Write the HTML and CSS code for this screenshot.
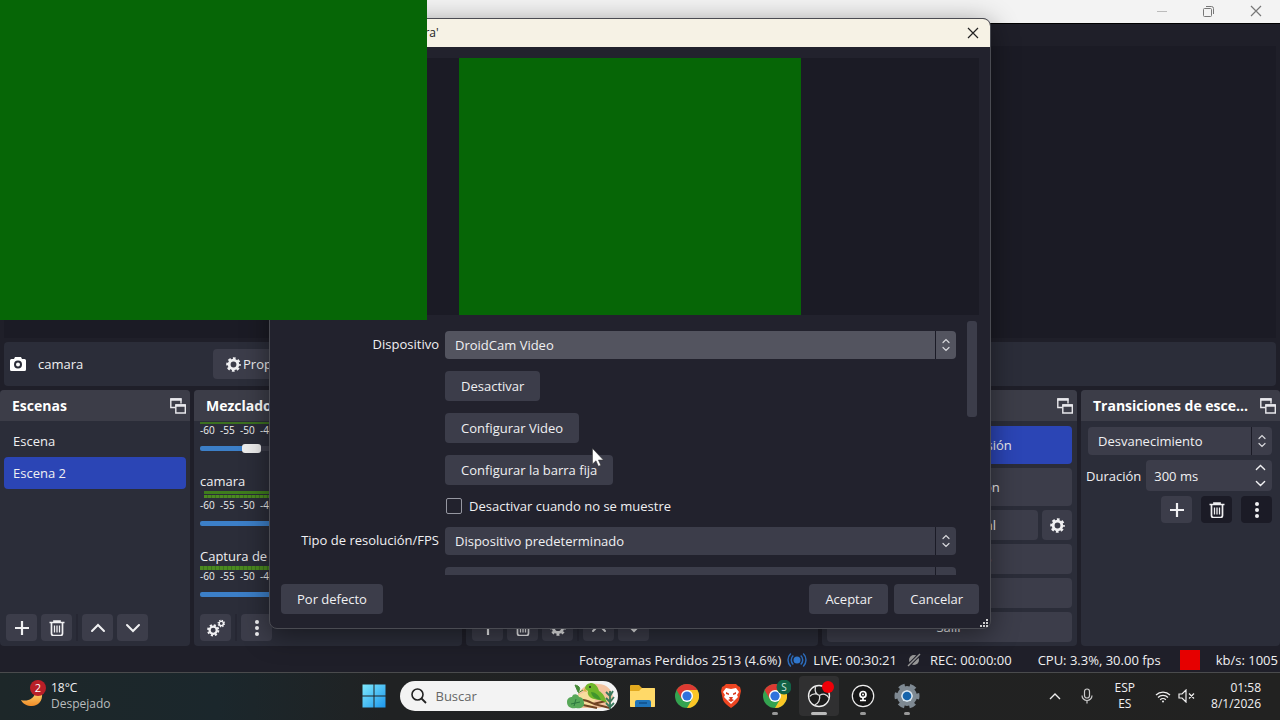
FILE: index.html
```html
<!DOCTYPE html>
<html lang="es">
<head>
<meta charset="utf-8">
<title>OBS</title>
<link rel="stylesheet" href="styles.css">
</head>
<body>
<svg class="defs" aria-hidden="true">
  <defs>
    <symbol id="plus" viewBox="0 0 16 16"><path d="M8 1v14M1 8h14" stroke="currentColor" stroke-width="2.2" fill="none"/></symbol>
    <symbol id="trash" viewBox="0 0 16 16"><path d="M0.500 2.500h15M5 2V1h6v1M2.500 3v10.500a2 2 0 0 0 2 2h7a2 2 0 0 0 2-2V3" stroke="currentColor" stroke-width="1.700" fill="none"/><path d="M5.500 5.500v7M8 5.500v7M10.500 5.500v7" stroke="currentColor" stroke-width="1.300"/></symbol>
    <symbol id="up" viewBox="0 0 16 16"><path d="M2 11l6-6 6 6" stroke="currentColor" stroke-width="2" fill="none" stroke-linecap="round"/></symbol>
    <symbol id="down" viewBox="0 0 16 16"><path d="M2 5l6 6 6-6" stroke="currentColor" stroke-width="2" fill="none" stroke-linecap="round"/></symbol>
    <symbol id="dots" viewBox="0 0 16 16"><circle cx="8" cy="2" r="2" fill="currentColor"/><circle cx="8" cy="8" r="2" fill="currentColor"/><circle cx="8" cy="14" r="2" fill="currentColor"/></symbol>
    <symbol id="gear" viewBox="0 0 16 16"><circle cx="8" cy="8" r="4.600" stroke="currentColor" stroke-width="3" fill="none"/><circle cx="8" cy="8" r="6.600" stroke="currentColor" stroke-width="2.400" stroke-dasharray="2.900 2.284" stroke-dashoffset="1.450" fill="none"/></symbol>
    <symbol id="gears" viewBox="0 0 16 16"><circle cx="5.500" cy="10" r="3.200" stroke="currentColor" stroke-width="2" fill="none"/><circle cx="5.500" cy="10" r="4.600" stroke="currentColor" stroke-width="1.700" stroke-dasharray="1.900 1.713" fill="none"/><circle cx="12.700" cy="4" r="1.900" stroke="currentColor" stroke-width="1.300" fill="none"/><circle cx="12.700" cy="4" r="2.800" stroke="currentColor" stroke-width="1.200" stroke-dasharray="1.200 0.999" fill="none"/></symbol>
    <symbol id="float" viewBox="0 0 16 16"><path d="M11 5.500V1H0.800v8.500H5.500" stroke="currentColor" stroke-width="1.400" fill="none"/><path d="M0.500 1.500h11" stroke="currentColor" stroke-width="2.500"/><path d="M5.800 7h9.500v8H5.800z" stroke="currentColor" stroke-width="1.400" fill="none"/><path d="M5.500 7.500h10" stroke="currentColor" stroke-width="2.500"/></symbol>
    <symbol id="updown" viewBox="0 0 8 14"><path d="M1 4.500l3-3 3 3M1 9.500l3 3 3-3" stroke="currentColor" stroke-width="1.200" fill="none" stroke-linecap="round"/></symbol>
    <symbol id="close" viewBox="0 0 12 12"><path d="M1 1l10 10M11 1L1 11" stroke="currentColor" stroke-width="1.200" fill="none"/></symbol>
    <symbol id="chrome" viewBox="0 0 24 24"><circle cx="12" cy="12" r="12" fill="#34a350"/><path d="M1.600 6A12 12 0 0 1 22.400 6L12 12 6.800 15z" fill="#dc3a32"/><path d="M22.400 6A12 12 0 0 1 12 24l5.200-9L12 6z" fill="#fbc626"/><circle cx="12" cy="12" r="6" fill="#fff"/><circle cx="12" cy="12" r="4.600" fill="#2f72dc"/></symbol>
  </defs>
</svg>

<div class="desktop">
  <main class="obs">
    <header class="obs-title">
      <button class="win-btn" aria-label="Minimizar"><svg width="10" height="10"><path d="M0 5.500h10" stroke="#bbb"/></svg></button>
      <button class="win-btn" aria-label="Restaurar"><svg width="11" height="11" viewBox="0 0 11 11"><path d="M0.500 3.500a1 1 0 0 1 1-1h6a1 1 0 0 1 1 1v6a1 1 0 0 1-1 1h-6a1 1 0 0 1-1-1zM3 .5h5.500a2 2 0 0 1 2 2V8" fill="none" stroke="#777"/></svg></button>
      <button class="win-btn" aria-label="Cerrar"><svg width="12" height="12"><use href="#close"/></svg></button>
    </header>
    <section class="canvas"></section>
    <section class="source-bar">
      <svg class="camera" width="16" height="14" viewBox="0 0 16 14"><path d="M5 0h6l1 2h2.500A1.500 1.500 0 0 1 16 3.500v9a1.500 1.500 0 0 1-1.500 1.500h-13A1.500 1.500 0 0 1 0 12.500v-9A1.500 1.500 0 0 1 1.500 2H4z" fill="#fff"/><circle cx="8" cy="7.500" r="3" stroke="#2b2d39" stroke-width="2" fill="none"/></svg>
      <span class="source-name">camara</span>
      <button class="btn props"><svg width="15" height="15"><use href="#gear"/></svg>Propiedades</button>
    </section>

    <section class="docks">
      <section class="dock">
        <header class="dock-head"><h2>Escenas</h2><svg width="16" height="16"><use href="#float"/></svg></header>
        <ul class="scenes"><li>Escena</li><li class="selected">Escena 2</li></ul>
        <footer class="tools">
          <button class="tool" aria-label="Añadir"><svg width="16" height="16"><use href="#plus"/></svg></button>
          <button class="tool" aria-label="Eliminar"><svg width="16" height="16"><use href="#trash"/></svg></button>
          <i class="sep"></i>
          <button class="tool" aria-label="Subir"><svg width="16" height="16"><use href="#up"/></svg></button>
          <button class="tool" aria-label="Bajar"><svg width="16" height="16"><use href="#down"/></svg></button>
        </footer>
      </section>

      <section class="dock">
        <header class="dock-head"><h2>Mezclador de audio</h2></header>
        <div class="mixer">
          <div class="channel">
            <div class="meter thin"></div>
            <div class="scale"><span>-60</span><span>-55</span><span>-50</span><span>-45</span></div>
            <div class="track part"><i class="thumb"></i></div>
          </div>
          <div class="channel">
            <div class="channel-name">camara</div>
            <div class="meter double"></div>
            <div class="scale"><span>-60</span><span>-55</span><span>-50</span><span>-45</span></div>
            <div class="track"></div>
          </div>
          <div class="channel">
            <div class="channel-name">Captura de audio</div>
            <div class="meter"></div>
            <div class="scale"><span>-60</span><span>-55</span><span>-50</span><span>-45</span></div>
            <div class="track"></div>
          </div>
        </div>
        <footer class="tools">
          <button class="tool" aria-label="Audio avanzado"><svg width="18" height="18"><use href="#gears"/></svg></button>
          <i class="sep"></i>
          <button class="tool" aria-label="Más"><svg width="16" height="16"><use href="#dots"/></svg></button>
        </footer>
      </section>

      <section class="dock">
        <header class="dock-head"></header>
        <footer class="tools">
          <button class="tool" aria-label="Añadir"><svg width="16" height="16"><use href="#plus"/></svg></button>
          <button class="tool" aria-label="Eliminar"><svg width="16" height="16"><use href="#trash"/></svg></button>
          <button class="tool" aria-label="Propiedades"><svg width="16" height="16"><use href="#gear"/></svg></button>
          <i class="sep"></i>
          <button class="tool" aria-label="Subir"><svg width="16" height="16"><use href="#up"/></svg></button>
          <button class="tool" aria-label="Bajar"><svg width="16" height="16"><use href="#down"/></svg></button>
        </footer>
      </section>

      <section class="dock">
        <header class="dock-head end"><svg width="16" height="16"><use href="#float"/></svg></header>
        <div class="controls">
          <button class="btn tall primary">Detener transmisión</button>
          <button class="btn tall">Iniciar grabación</button>
          <div class="split"><button class="btn">Iniciar cámara virtual</button><button class="btn cfg" aria-label="Configurar cámara virtual"><svg width="15" height="15"><use href="#gear"/></svg></button></div>
          <button class="btn">Modo Estudio</button>
          <button class="btn" aria-label="Ajustes"></button>
          <button class="btn">Salir</button>
        </div>
      </section>

      <section class="dock">
        <header class="dock-head"><h2>Transiciones de esce...</h2><svg width="16" height="16"><use href="#float"/></svg></header>
        <div class="transitions">
          <div class="select"><select aria-label="Transición"><option>Desvanecimiento</option></select><span class="arrows"><svg width="8" height="14"><use href="#updown"/></svg></span></div>
          <div class="duration">
            <label for="dur">Duración</label>
            <div class="spin"><input id="dur" type="text" value="300 ms"><span class="spin-btns"><button aria-label="Aumentar"><svg width="11" height="11"><use href="#up"/></svg></button><button aria-label="Reducir"><svg width="11" height="11"><use href="#down"/></svg></button></span></div>
          </div>
          <div class="trans-tools">
            <button class="tool" aria-label="Añadir"><svg width="16" height="16"><use href="#plus"/></svg></button>
            <button class="tool dark" aria-label="Eliminar"><svg width="16" height="16"><use href="#trash"/></svg></button>
            <button class="tool dark" aria-label="Más"><svg width="16" height="16"><use href="#dots"/></svg></button>
          </div>
        </div>
      </section>
    </section>

    <footer class="status">
      <span class="frames">Fotogramas Perdidos 2513 (4.6%)</span>
      <svg class="live-icon" width="20" height="16" viewBox="0 0 20 16" fill="none" stroke="#2d6dbd" stroke-width="1.500"><circle cx="10" cy="8" r="3.500" fill="#3078d0" stroke="none"/><path d="M6.300 3.500a6 6 0 0 0 0 9M13.700 3.500a6 6 0 0 1 0 9M3.800 1.500a9 9 0 0 0 0 13M16.200 1.500a9 9 0 0 1 0 13"/></svg>
      <span class="live">LIVE: 00:30:21</span>
      <svg class="rec-icon" width="14" height="14" viewBox="0 0 14 14"><circle cx="7" cy="7" r="5" fill="#999"/><path d="M1 13L13 1" stroke="#1f1f29" stroke-width="3.500"/><path d="M1 13L13 1" stroke="#999" stroke-width="1.400"/></svg>
      <span class="rec">REC: 00:00:00</span>
      <span class="cpu">CPU: 3.3%, 30.00 fps</span>
      <i class="net"></i>
      <span class="rate">kb/s: 1005</span>
    </footer>
  </main>

  <section class="dialog" role="dialog" aria-label="Propiedades">
    <header class="dialog-title"><span>Propiedades de 'camara'</span><button class="dialog-close" aria-label="Cerrar"><svg width="12" height="12"><use href="#close"/></svg></button></header>
    <div class="dialog-body">
      <div class="dialog-preview"><div class="feed"></div></div>
      <div class="form-scroll">
        <form class="form">
          <label for="dev">Dispositivo</label>
          <div class="select hover"><select id="dev"><option>DroidCam Video</option></select><span class="arrows"><svg width="8" height="14"><use href="#updown"/></svg></span></div>
          <button type="button" class="btn fit">Desactivar</button>
          <button type="button" class="btn fit">Configurar Video</button>
          <button type="button" class="btn fit">Configurar la barra fija</button>
          <div class="check"><input type="checkbox" id="off"><label for="off">Desactivar cuando no se muestre</label></div>
          <label for="res">Tipo de resolución/FPS</label>
          <div class="select"><select id="res"><option>Dispositivo predeterminado</option></select><span class="arrows"><svg width="8" height="14"><use href="#updown"/></svg></span></div>
          <div class="select field"><select aria-label="Resolución"></select><span class="arrows"></span></div>
        </form>
        <div class="scrollbar"><i></i></div>
      </div>
      <footer class="dialog-foot">
        <button class="btn fit first">Por defecto</button>
        <button class="btn fit">Aceptar</button>
        <button class="btn fit">Cancelar</button>
      </footer>
    </div>
    <svg class="grip" width="8" height="8" viewBox="0 0 8 8" fill="#ccc"><path d="M6 0h2v2H6zM6 3h2v2H6zM3 3h2v2H3zM6 6h2v2H6zM3 6h2v2H3zM0 6h2v2H0z"/></svg>
  </section>

  <div class="camera-overlay"></div>
  <svg class="cursor" width="12" height="19" viewBox="0 0 12 19"><path d="M0.500 0.500v15.500l3.500-3.200 2.400 5.500 2.400-1-2.400-5.300h5z" fill="#fff" stroke="#333" stroke-width="0.500"/></svg>

  <footer class="taskbar">
    <div class="weather">
      <svg width="28" height="32" viewBox="0 0 28 32"><defs><linearGradient id="moon" x1="0" y1="0" x2="0" y2="1"><stop offset="0" stop-color="#ffcf6a"/><stop offset="1" stop-color="#f08c28"/></linearGradient></defs><path d="M1 20c6 2 13-1 14-7l7 0c1 8-4 13-10 13-5 0-9-2-11-6z" fill="url(#moon)"/><circle cx="18" cy="8" r="8" fill="#b91f28"/><text x="18" y="12" text-anchor="middle" class="badge-text">2</text></svg>
      <div class="weather-text"><span>18°C</span><span class="muted">Despejado</span></div>
    </div>
    <nav class="apps">
      <button class="app" aria-label="Inicio"><svg width="24" height="24" viewBox="0 0 24 24"><defs><linearGradient id="win" x1="0" y1="0" x2="1" y2="1"><stop offset="0" stop-color="#7ee9fc"/><stop offset="1" stop-color="#1c96ec"/></linearGradient></defs><path d="M0.500 0.500h11v11h-11zM12.500 0.500h11v11h-11zM0.500 12.500h11v11h-11zM12.500 12.500h11v11h-11z" fill="url(#win)"/></svg></button>
      <div class="search">
        <svg width="16" height="16" viewBox="0 0 16 16"><circle cx="6.500" cy="6.500" r="5.500" stroke="#222" stroke-width="1.600" fill="none"/><path d="M10.500 10.500l4.500 4.500" stroke="#222" stroke-width="1.800"/></svg>
        <input type="text" placeholder="Buscar" aria-label="Buscar">
        <svg width="50" height="28" viewBox="0 0 50 28"><path d="M12 12C17 3 25 1 32 2c9 0 14 6 15 13 0 7-6 10-14 11H14z" fill="#f4c4a0"/><path d="M12 14c6-6 14-6 20-2l-6 12H13z" fill="#f7dd9d"/><path d="M17 18c6 0 10 5 15 5l12 3M27 22l13-3M31 26l-14-3" stroke="#704322" stroke-width="2" fill="none"/><path d="M19 7c0-4 3-6 7-6 4 1 6 4 7 8 4 2 6 6 8 12-5-3-9-3-13-4-5-1-7-5-6-8z" fill="#6fb62b"/><path d="M25 10c4 0 8 3 10 8-6-1-9-3-10-8z" fill="#41942d"/><circle cx="24" cy="5" r="1" fill="#222"/><path d="M19 6l-2 3 4 1z" fill="#d7b448"/><path d="M1 20c0-4 3-5 5-5 1-4 6-3 7 0 4 0 5 4 5 6 1 4-4 6-8 5-5 1-9-1-9-6z" fill="#58a859"/><path d="M5 22l9-2M10 17l-2 7" stroke="#2d783f"/><path d="M12 10l-3-7c5 1 6 4 3 7zM12 11l5-3" fill="#458a36" stroke="#458a36"/><path d="M44 27V9M44 14l-4-4M44 14l3-5M44 20l-4-4M44 20l4-5M44 25l-4-4M44 25l4-4" stroke="#39795c" stroke-width="1.800"/></svg>
      </div>
      <button class="app" aria-label="Explorador"><svg width="26" height="24" viewBox="0 0 26 24"><path d="M1 1h8l3 3h12a1 1 0 0 1 1 1v17a1 1 0 0 1-1 1H1a1 1 0 0 1-1-1V2a1 1 0 0 1 1-1z" fill="#e2a91f"/><path d="M0 7h9l3-3h12a1 1 0 0 1 1 1v17a1 1 0 0 1-1 1H1a1 1 0 0 1-1-1z" fill="#ffd968"/><path d="M5 23v-5a2 2 0 0 1 2-2h12a2 2 0 0 1 2 2v5z" fill="#1f74ba"/><path d="M9 19h8" stroke="#124f89" stroke-width="1.500"/></svg></button>
      <button class="app" aria-label="Chrome"><svg width="24" height="24"><use href="#chrome"/></svg></button>
      <button class="app" aria-label="Brave"><svg width="20" height="24" viewBox="0 0 20 24"><path d="M5 0h10l2 2 2 1 1 4-2 9c-1 3-4 5-8 8-4-3-7-5-8-8L0 7l1-4 2-1z" fill="#ee4521"/><path d="M5 4l5 1 5-1 3 4-2 3 1 2-3 3-4 4-4-4-3-3 1-2-2-3z" fill="#fff"/><path d="M5 8l3 1.500v1.500L5 10zM15 8l-3 1.500v1.500l3-1zM8 13h4l-1 2 2 1-3 2-3-2 2-1z" fill="#d8391f"/></svg></button>
      <button class="app open" aria-label="Chrome, perfil S"><svg width="32" height="32" viewBox="0 0 32 32"><use href="#chrome" x="4" y="4" width="24" height="24"/><circle cx="25" cy="7" r="7.500" fill="#126246"/><text x="25" y="11" text-anchor="middle" class="profile-text">S</text></svg></button>
      <button class="app open active" aria-label="OBS"><svg width="32" height="32" viewBox="0 0 32 32"><circle cx="16" cy="16" r="10.500" fill="#1c1c1c" stroke="#eee" stroke-width="1.300"/><path d="M12.500 7c-1 4 0 7 4 8.500M26 18c-2-4-6-5-9.500-2.500M16.500 15.500c1 4-1 8-5 9.500M16.500 15.500c-3-2-7-2-10 1" stroke="#ddd" stroke-width="1.300" fill="none"/><circle cx="25" cy="7" r="6" fill="#f00008"/></svg></button>
      <button class="app open" aria-label="DroidCam"><svg width="24" height="24" viewBox="0 0 24 24"><circle cx="12" cy="12" r="10.700" fill="#161616" stroke="#eee" stroke-width="1.200"/><circle cx="12" cy="10.500" r="3" stroke="#fff" stroke-width="1.700" fill="none"/><circle cx="12" cy="10.500" r="1" fill="#fff"/><path d="M12 13v3M9 16.500h6" stroke="#fff" stroke-width="1.700"/></svg></button>
      <button class="app open" aria-label="Configuración"><svg width="26" height="26" viewBox="0 0 26 26"><circle cx="13" cy="13" r="8" stroke="#7e8992" stroke-width="4" fill="none"/><circle cx="13" cy="13" r="10.500" stroke="#7e8992" stroke-width="4" stroke-dasharray="6 4.996" stroke-dashoffset="3" fill="none"/><circle cx="13" cy="13" r="6" fill="#d9e6f0"/><circle cx="13" cy="13" r="4.300" fill="#1664ab"/></svg></button>
    </nav>
    <div class="tray">
      <svg width="12" height="12" viewBox="0 0 12 12"><path d="M1 9l5-5 5 5" fill="none" stroke="#eee" stroke-width="1.400"/></svg>
      <svg class="mic" width="12" height="16" viewBox="0 0 12 16" fill="none" stroke="#ccc" stroke-width="1.200"><rect x="3.500" y="1" width="5" height="9" rx="2.500"/><path d="M1 7.500a5 5 0 0 0 10 0M6 12.500v3"/></svg>
      <div class="lang"><span>ESP</span><span>ES</span></div>
      <svg class="wifi" width="16" height="13" viewBox="0 0 16 13" fill="none" stroke="#eee" stroke-width="1.300"><path d="M1 5a10 10 0 0 1 14 0M3 7.500a7 7 0 0 1 10 0M5.200 9.800a4 4 0 0 1 5.600 0"/><circle cx="8" cy="11.500" r="1" fill="#eee" stroke="none"/></svg>
      <svg class="mute" width="17" height="14" viewBox="0 0 17 14" fill="none" stroke="#eee" stroke-width="1.200"><path d="M1 5h3l4-4v12L4 9H1zM11 4.500l5 5M16 4.500l-5 5"/></svg>
      <div class="clock"><span>01:58</span><span>8/1/2026</span></div>
    </div>
  </footer>
</div>
</body>
</html>
```
FILE: styles.css
```css
* { box-sizing: border-box; }
body { margin: 0; font: 13px/20px "Open Sans", "Noto Sans", sans-serif; color: #f0f0f2; background: #1f1f29; }
button, input, select { font: inherit; color: inherit; border: 0; padding: 0; margin: 0; background: none; }
svg { display: block; flex: none; }
h2, ul { margin: 0; padding: 0; }
.defs { position: absolute; width: 0; height: 0; }

.desktop { position: relative; display: flex; flex-direction: column; min-height: 100vh; overflow: hidden; }
.obs { flex: 1; display: flex; flex-direction: column; background: #1f1f29; }
.obs-title { display: flex; justify-content: flex-end; height: 24px; padding: 0 1px 1px 0; background: #f3f3f3; border-bottom: 1px solid #000; }
.win-btn { width: 47px; display: grid; place-items: center; color: #777; }
.canvas { flex: 1; margin: 22px 4px 4px; background: #1b1b25; }
.source-bar { display: flex; align-items: center; height: 44px; margin: 0 4px 4px; padding: 0 6px; background: #2b2d39; border-radius: 4px; }
.source-name { width: 175px; margin-left: 12px; }

.btn { display: flex; align-items: center; justify-content: center; height: 30px; background: #3c3d4a; border-radius: 4px; }
.props { padding: 0 13px; gap: 2px; }

.docks { display: grid; grid-template-columns: 190fr 268fr 352fr 255fr 199fr; gap: 4px; height: 256px; }
.dock { display: flex; flex-direction: column; min-width: 0; background: #2b2d39; border-radius: 4px; overflow: hidden; }
.dock-head { display: flex; align-items: center; justify-content: space-between; flex: none; height: 31px; padding: 0 4px 0 12px; background: #3c3d48; color: #e8e8ec; }
.dock-head h2 { font-size: 14px; line-height: 20px; font-weight: 700; white-space: nowrap; color: #fff; }
.dock-head.end { justify-content: flex-end; }
.scenes { flex: 1; list-style: none; padding: 4px; }
.scenes li { height: 32px; padding: 6px 9px; border-radius: 4px; }
.scenes .selected { background: #2b45b5; }
.tools { display: flex; gap: 4px; padding: 0 7px 5px 6px; margin-top: auto; }
.tool { display: grid; place-items: center; width: 31px; height: 27px; background: #3c3d4a; border-radius: 4px; }
.tool.dark { background: #1b1b26; }
.sep { width: 2px; background: #262733; }

.mixer { flex: 1; display: flex; flex-direction: column; justify-content: flex-end; gap: 18px; min-height: 0; padding: 0 0 15px 6px; }
.channel-name { height: 20px; }
.meter { height: 4px; background: repeating-linear-gradient(90deg, #4b8a20 0 3px, #3b6f1d 3px 4px); }
.meter.thin { height: 2px; background: #3c7020; }
.meter.double { height: 8px; margin-left: 4px; border-top: 3px solid #3f7d1d; border-bottom: 1px solid #2b2d39; box-shadow: inset 0 1px #2b2d39; }
.scale { display: flex; height: 12px; font-size: 10px; line-height: 12px; }
.scale span { width: 20px; flex: none; }
.track { height: 5px; margin: 10px 0 2px; background: #3c7fc8; border-radius: 2px; }
.track.part { display: flex; align-items: center; padding-left: 42px; background: linear-gradient(90deg, #3c7fc8 52px, #3c3d4a 52px); }
.thumb { width: 19px; height: 9px; flex: none; background: #eee; border-radius: 3px; }

.controls { display: flex; flex-direction: column; gap: 4px; padding: 5px 5px 4px; }
.tall { height: 38px; }
.primary { background: #2b45b5; }
.split { display: flex; gap: 4px; }
.split .btn { flex: 1; }
.split .cfg { flex: 0 0 30px; }

.transitions { display: flex; flex-direction: column; gap: 5px; padding: 6px 8px 0 5px; }
.transitions .select { margin-left: 2px; }
.select { position: relative; display: flex; height: 28px; background: #3c3d4a; border-radius: 4px; overflow: hidden; }
.select select { appearance: none; flex: 1; min-width: 0; padding: 0 10px; }
.select.hover { background: #53545f; }
.arrows { display: grid; place-items: center; width: 21px; border-left: 1px solid #1b1b26; color: #d8d8dc; }
.duration { display: flex; align-items: center; gap: 5px; }
.spin { flex: 1; display: flex; height: 31px; background: #3c3d4a; border-radius: 4px; }
.spin input { flex: 1; width: 0; padding-left: 8px; }
.spin-btns { display: grid; width: 23px; place-items: center; }
.trans-tools { display: flex; justify-content: flex-end; gap: 9px; }

.status { display: flex; align-items: center; justify-content: flex-end; height: 26px; padding: 2px 2px 0 0; white-space: nowrap; }
.live-icon { margin: 0 6px; }
.rec-icon { margin: 0 9px 0 10px; }
.cpu { margin: 0 19px 0 26px; }
.net { width: 20px; height: 20px; margin-right: 16px; background: #e60000; }

.dialog { position: absolute; left: 269px; top: 18px; width: 722px; background: #22222d; border: 1px solid #4a4b52; border-radius: 8px; box-shadow: 0 6px 28px rgba(0, 0, 0, .45); }
.dialog-title { display: flex; align-items: center; justify-content: space-between; height: 28px; padding: 0 11px 0 31px; background: #f6f2e5; color: #222; font-size: 12px; border-radius: 7px 7px 0 0; }
.dialog-close { display: grid; place-items: center; }
.dialog-body { padding: 11px 11px 14px; }
.dialog-preview { display: flex; justify-content: center; background: #1b1b25; }
.feed { width: 342px; height: 257px; background: #066606; }
.form-scroll { display: flex; height: 255px; margin-top: 5px; overflow: hidden; }
.form { flex: 1; display: grid; grid-template-columns: 158px 1fr; grid-auto-rows: max-content; gap: 12px 6px; padding: 11px 11px 0 0; }
.form > label { text-align: right; line-height: 26px; height: 28px; }
.form > .btn, .check, .field { grid-column: 2; }
.fit { justify-self: start; padding: 0 16px; }
.check { display: flex; align-items: center; gap: 7px; height: 18px; padding-left: 1px; }
.check input { appearance: none; width: 16px; height: 16px; border: 1px solid #9697a1; border-radius: 2px; }
.scrollbar { width: 12px; padding-top: 1px; }
.scrollbar i { display: block; width: 10px; height: 96px; background: #3c3d4a; border-radius: 3px; }
.dialog-foot { display: flex; gap: 6px; margin-top: 9px; }
.first { margin-right: auto; }
.grip { position: absolute; right: 2px; bottom: 1px; }
.camera-overlay { position: absolute; left: 0; top: 0; width: 427px; height: 320px; background: #066606; }
.cursor { position: absolute; left: 592px; top: 448px; }

.taskbar { display: grid; grid-template-columns: 1fr auto 1fr; align-items: center; height: 48px; padding-bottom: 1px; border-top: 1px solid #4a4b4d; background: linear-gradient(90deg, #1d2729, #1b272c 17%, #202223 30%, #222221); font-size: 12px; line-height: 16px; position: relative; }
.weather { display: flex; align-items: center; gap: 3px; padding-left: 20px; }
.weather-text, .lang, .clock { display: flex; flex-direction: column; }
.muted { color: #b9bcbd; }
.badge-text { font-size: 11px; fill: #fff; }
.profile-text { font-size: 10px; fill: #d5e8df; }
.apps { display: flex; align-items: center; gap: 4px; }
.app { position: relative; display: grid; place-items: center; width: 40px; height: 40px; border-radius: 4px; }
.app.active { background: #303031; }
.app.open::after { content: ""; position: absolute; left: 17px; bottom: 1px; width: 6px; height: 3px; border-radius: 2px; background: #999; }
.app.active::after { left: 12px; width: 16px; background: #bbb; }
.search { display: flex; align-items: center; width: 218px; height: 30px; padding: 0 2px 0 11px; margin: 0 1px 0 2px; background: #f3f3f3; border-radius: 15px; }
.search input { flex: 1; min-width: 0; padding-left: 9px; font-size: 13px; color: #333; outline: 0; }
.search input::placeholder { color: #666; opacity: 1; }
.tray { display: flex; align-items: center; justify-content: flex-end; padding-right: 19px; }
.mic { margin: 0 22px 0 20px; }
.lang { align-items: center; }
.wifi { margin: 0 7px 0 20px; }
.mute { margin-right: 16px; }
.clock { align-items: flex-end; }
```
